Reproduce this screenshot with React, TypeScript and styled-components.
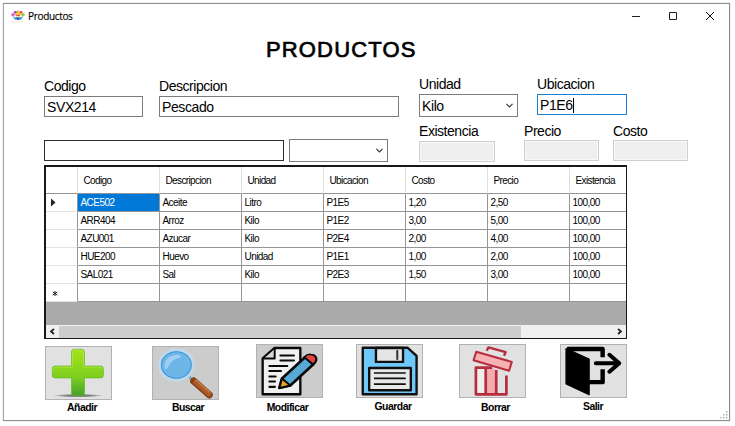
import React from "react";
import styled, { createGlobalStyle } from "styled-components";

const GlobalStyle = createGlobalStyle`
  *, *::before, *::after { box-sizing: border-box; }
  body { margin: 0; background: #fff; }
  body, button { font-family: "Liberation Sans", Arial, sans-serif; color: #000; }
`;

const Page = styled.div`
  width: 735px;
  height: 426px;
  padding: 3px;
  overflow: hidden;
  background: #fff;
`;

const Window = styled.main`
  display: flex;
  flex-direction: column;
  width: 727px;
  height: 418px;
  border: 1px solid #8c8c8c;
  border-left-color: #a5a5a5;
  box-shadow: 0 0 1px #aaa;
  position: relative;
`;

const TitleBar = styled.header`
  display: flex;
  align-items: center;
  height: 24px;
  padding: 0 11px 0 7px;
`;

const Caption = styled.span`
  flex: 1;
  padding-left: 3px;
  font: 10px/14px "Open Sans", "Noto Sans", sans-serif;
  letter-spacing: -0.33px;
  -webkit-text-stroke: 0.15px #000;
`;

const Controls = styled.div`
  display: flex;
  gap: 27px;
  padding-right: 3px;
`;

const Control = styled.button`
  display: flex;
  width: 10px;
  height: 10px;
  padding: 0;
  border: 0;
  background: none;
`;

const Heading = styled.h1`
  margin: 9px 0 0 262px;
  height: 25px;
  font-size: 22px;
  line-height: 26px;
  font-weight: 400;
  letter-spacing: 1.15px;
  -webkit-text-stroke: 0.7px #000;
`;

const FormRow = styled.div<{ $h: number }>`
  display: flex;
  align-items: flex-end;
  height: ${(p) => p.$h}px;
  margin-left: 40px;
`;

const Field = styled.label<{ $w: number; $before?: number; $lift?: number }>`
  display: flex;
  flex-direction: column;
  width: ${(p) => p.$w}px;
  margin-left: ${(p) => p.$before ?? 0}px;
  margin-bottom: ${(p) => p.$lift ?? 0}px;
`;

const FieldLabel = styled.span<{ $gap?: number }>`
  font-size: 14px;
  line-height: 16px;
  letter-spacing: -0.46px;
  white-space: nowrap;
  margin-bottom: ${(p) => p.$gap ?? 2}px;
`;

const Box = styled.span<{ $tone?: "focus" | "disabled" | "dark"; $tall?: boolean }>`
  display: flex;
  align-items: center;
  height: ${(p) => (p.$tall ? 23 : 21)}px;
  padding: 0 4px 0 2px;
  border: 1px solid
    ${(p) =>
      p.$tone === "focus" ? "#1a80d9" : p.$tone === "disabled" ? "#cfcfcf" : p.$tone === "dark" ? "#303030" : "#7c7c7c"};
  background: ${(p) => (p.$tone === "disabled" ? "#efefef" : "#fff")};
  box-shadow: ${(p) => (p.$tone === "disabled" ? "inset 0 0 0 1px #f8f8f8" : "none")};
  font-size: 14px;
  line-height: 16px;
  letter-spacing: -0.4px;
`;

const Value = styled.span`
  flex: 1;
`;

const Caret = styled.i`
  display: inline-block;
  width: 1px;
  height: 15px;
  background: #000;
  vertical-align: -3px;
`;

const Grid = styled.section`
  display: flex;
  flex-direction: column;
  width: 583px;
  height: 174px;
  margin: 3px 0 0 40px;
  border: 1px solid #181818;
  border-top-width: 2px;
  border-left-width: 2px;
  background: #ababab;
`;

const GridRow = styled.div<{ $header?: boolean }>`
  display: grid;
  grid-template-columns: 32px repeat(6, 82px) 1fr;
  height: ${(p) => (p.$header ? 27 : 18)}px;
  overflow: hidden;
  font-size: 10px;
  line-height: ${(p) => (p.$header ? 27 : 17)}px;
  letter-spacing: ${(p) => (p.$header ? -0.62 : -0.56)}px;
`;

const Cell = styled.span<{ $kind?: "head" | "stub" | "selected" }>`
  display: flex;
  align-items: center;
  overflow: hidden;
  padding-left: ${(p) => (p.$kind === "head" ? 5.5 : 2.5)}px;
  border-right: 1px solid ${(p) => (p.$kind === "head" ? "#dedede" : "#959595")};
  border-bottom: 1px solid ${(p) => (p.$kind === "stub" ? "#e2e2e2" : "#959595")};
  background: ${(p) => (p.$kind === "selected" ? "#0078d7" : "#fff")};
  color: ${(p) => (p.$kind === "selected" ? "#fff" : "#000")};
  &:last-child { border-right: 0; }
`;

const ScrollBar = styled.div`
  display: flex;
  align-items: center;
  height: 13px;
  margin-top: auto;
  background: #f0f0f0;
`;

const Arrow = styled.svg`
  width: 13px;
  height: 13px;
  fill: none;
  stroke: #222;
  stroke-width: 1.7;
`;

const Thumb = styled.div`
  width: 462px;
  height: 12px;
  margin-right: auto;
  background: #cdcdcd;
`;

const Actions = styled.footer`
  display: flex;
  align-items: flex-start;
  margin: 5px 0 0 41px;
`;

const Action = styled.div<{ $before: number; $drop?: boolean }>`
  display: flex;
  flex-direction: column;
  width: 67px;
  margin-left: ${(p) => p.$before}px;
  margin-top: ${(p) => (p.$drop ? 2 : 0)}px;
`;

const ActionButton = styled.button<{ $dim?: boolean }>`
  display: flex;
  width: 67px;
  height: 54px;
  padding: 0;
  border: 1px solid #b2b2b2;
  background: ${(p) => (p.$dim ? "#cccccc" : "#e1e1e1")};
  svg { width: 65px; height: 52px; }
`;

const ActionLabel = styled.span<{ $gap: number; $shift?: number }>`
  margin-top: ${(p) => p.$gap}px;
  padding-left: ${(p) => Math.max(p.$shift ?? 0, 0)}px;
  padding-right: ${(p) => Math.max(-(p.$shift ?? 0), 0)}px;
  text-align: center;
  font-size: 10.4px;
  line-height: 12px;
  font-weight: 700;
  letter-spacing: -0.5px;
`;

const Grip = styled.svg`
  position: absolute;
  right: 1px;
  bottom: 1px;
  width: 8px;
  height: 8px;
  fill: #b4b4b4;
`;

const ChevronDown = () => (
  <svg width="7" height="5" viewBox="0 0 7 5" fill="none" stroke="#333" strokeWidth="1.1">
    <path d="M.4 .9 3.5 4 6.6 .9" />
  </svg>
);

const AppIcon = () => (
  <svg width="14" height="13" viewBox="0 0 14 13">
    <path d="M7 0 9 3 5 3Z" fill="#f3a61c" />
    <circle cx="4.3" cy="2.3" r="1.5" fill="#a44bc0" />
    <circle cx="10" cy="2.3" r="1.5" fill="#ef5a3c" />
    <circle cx="2" cy="4.7" r="1.7" fill="#e55ac3" />
    <circle cx="12" cy="4.7" r="1.7" fill="#8ed04a" />
    <path d="M4 4 7 2 10 4 8.8 6.5H5.2Z" fill="#f5d128" />
    <path d="M4.6 4.7 7 5.8 9.4 4.7" stroke="#d93a5e" fill="none" />
    <path d="M2 6.5Q7 8.2 12 6.5L10.2 9.8H3.8Z" fill="#3aa7e0" />
    <path d="M5.3 7.5H8.7L8 9.8H6Z" fill="#3453b8" />
    <path d="M1.5 11.8H12.5" stroke="#f3c49c" strokeDasharray="1.5 1.3" />
  </svg>
);

const AddIcon = () => (
  <svg viewBox="49 27 196 153" preserveAspectRatio="none">
    <defs>
      <linearGradient id="leaf" x1="0" y1="0" x2="0" y2="1">
        <stop offset="0" stopColor="#a4e318" />
        <stop offset=".6" stopColor="#7fcf20" />
        <stop offset="1" stopColor="#43a02a" />
      </linearGradient>
      <radialGradient id="shade">
        <stop offset="0" stopColor="#666" />
        <stop offset=".6" stopColor="#8c8c8c" />
        <stop offset="1" stopColor="#e1e1e1" />
      </radialGradient>
    </defs>
    <ellipse cx="146" cy="170" rx="76" ry="5" fill="url(#shade)" />
    <path
      d="M133 34H158Q165 34 165 42V83H214Q222 83 222 91V110Q222 118 214 118H165V162Q165 170 157 170H134Q126 170 126 162V118H76Q68 118 68 110V91Q68 83 76 83H126V42Q126 34 133 34Z"
      fill="url(#leaf)"
      stroke="#5fb51c"
      strokeWidth="2"
    />
    <path d="M129 84V42Q129 37 134 37H157Q162 37 162 42V86H212Q219 86 219 94M71 98V92Q71 86 77 86H129" fill="none" stroke="#b6eb52" strokeWidth="2" />
  </svg>
);

const SearchIcon = () => (
  <svg viewBox="369 27 195 153" preserveAspectRatio="none">
    <path d="M476 113 490 126" stroke="#79aacb" strokeWidth="8" />
    <path d="M491 127 538 168" stroke="#85411b" strokeWidth="21" strokeLinecap="round" />
    <path d="M492 126 537 165" stroke="#ad5a27" strokeWidth="14" strokeLinecap="round" />
    <path d="M496 123 539 160" stroke="#d0884f" strokeWidth="3" strokeLinecap="round" />
    <path d="M482 133 495 119" stroke="#703615" strokeWidth="4" />
    <ellipse cx="439" cy="80" rx="51" ry="45" fill="#6eb6e8" stroke="#c1d8e9" strokeWidth="9" />
    <ellipse cx="439" cy="80" rx="45" ry="39" fill="none" stroke="#3f98d9" strokeWidth="3" />
    <path d="M404 88Q402 55 438 50Q456 48 451 58Q423 63 413 88Q408 97 404 88Z" fill="#9ed0f2" />
  </svg>
);

const EditIcon = () => (
  <svg viewBox="81 22 195 154" preserveAspectRatio="none" strokeLinejoin="round" strokeLinecap="round">
    <path d="M133 31H211V168H98V62Z" fill="#f0f0f0" stroke="#090909" strokeWidth="7" />
    <path d="M134 34V62H102" fill="#d9d9d9" stroke="#090909" strokeWidth="6" />
    <path d="M151 53H192M151 68H192M118 84H172M118 99H153M118 115H137M118 130H135M118 146H135" stroke="#090909" strokeWidth="6" />
    <path d="M156 121 225 58Q232 50 242 51Q255 52 258 61Q260 69 251 78L181 142 148 149Z" fill="#59a9d6" stroke="#090909" strokeWidth="8" />
    <path d="M156 121 181 142 148 149Z" fill="#eca329" stroke="#090909" strokeWidth="6" />
    <path d="M226 59Q233 51 241 52Q254 53 256 62Q257 69 248 77Z" fill="#e64340" />
    <path d="M223 58 249 80" stroke="#090909" strokeWidth="6" />
  </svg>
);

const SaveIcon = () => (
  <svg viewBox="381 22 192 154" preserveAspectRatio="none" strokeLinejoin="round">
    <path d="M398 30H530L557 54V168H398Z" fill="#70c8fa" stroke="#101010" strokeWidth="7" />
    <path d="M437 31H517V72H437Z" fill="#e5e5e5" stroke="#101010" strokeWidth="7" />
    <path d="M500 37V66" stroke="#333" strokeWidth="6" />
    <path d="M417 90H540V156H417Z" fill="#e8e8e8" stroke="#101010" strokeWidth="7" />
    <path d="M431 105H525M431 121H525M431 138H525" stroke="#101010" strokeWidth="5" />
  </svg>
);

const DeleteIcon = () => (
  <svg viewBox="91 22 192 154" preserveAspectRatio="none" strokeLinejoin="round" fill="none">
    <path d="M170 39 175 29 226 43 221 54" stroke="#b82d3e" strokeWidth="7" />
    <path d="M138 89H166V169H138Z" fill="#eee" />
    <path d="M166 89H182L198 96V169H166Z" fill="#f3adb0" />
    <path d="M186 89H138V168H228V112M167 90V168M198 96V168" stroke="#b82d3e" strokeWidth="8" />
    <path d="M139 42 244 72 236 98 131 67Z" fill="#f6b1b3" stroke="#b82d3e" strokeWidth="6" />
  </svg>
);

const ExitIcon = () => (
  <svg viewBox="393 22 192 154" preserveAspectRatio="none" strokeLinejoin="round" fill="none" stroke="#000">
    <path d="M411 34H516V58M516 94V132H474" strokeWidth="13" />
    <path d="M408 33 476 64V169L408 137Z" fill="#000" strokeWidth="4" />
    <path d="M440 42 478 59" stroke="#e1e1e1" strokeWidth="3" />
    <path d="M496 76H565M536 51 565 76 536 101" strokeWidth="12" strokeLinecap="round" />
  </svg>
);

const columns = ["Codigo", "Descripcion", "Unidad", "Ubicacion", "Costo", "Precio", "Existencia"];

const products = [
  ["ACE502", "Aceite", "Litro", "P1E5", "1,20", "2,50", "100,00"],
  ["ARR404", "Arroz", "Kilo", "P1E2", "3,00", "5,00", "100,00"],
  ["AZU001", "Azucar", "Kilo", "P2E4", "2,00", "4,00", "100,00"],
  ["HUE200", "Huevo", "Unidad", "P1E1", "1,00", "2,00", "100,00"],
  ["SAL021", "Sal", "Kilo", "P2E3", "1,50", "3,00", "100,00"],
];

const actions = [
  { label: "Añadir", Icon: AddIcon, before: 0, drop: true, dim: false, gap: 2, shift: 7 },
  { label: "Buscar", Icon: SearchIcon, before: 40, drop: true, dim: true, gap: 2, shift: 5 },
  { label: "Modificar", Icon: EditIcon, before: 37, drop: false, dim: true, gap: 4, shift: -4 },
  { label: "Guardar", Icon: SaveIcon, before: 33, drop: false, dim: false, gap: 3, shift: 7 },
  { label: "Borrar", Icon: DeleteIcon, before: 36, drop: false, dim: false, gap: 4, shift: 6 },
  { label: "Salir", Icon: ExitIcon, before: 34, drop: false, dim: false, gap: 3, shift: -1 },
];

export default function App() {
  return (
    <Page>
      <GlobalStyle />
      <Window>
        <TitleBar>
          <AppIcon />
          <Caption>Productos</Caption>
          <Controls>
            <Control aria-label="Minimizar">
              <svg width="10" height="10" stroke="#222"><path d="M1 5.5H9" /></svg>
            </Control>
            <Control aria-label="Maximizar">
              <svg width="10" height="10" fill="none" stroke="#222"><path d="M1.5 1.5H8.5V8.5H1.5Z" /></svg>
            </Control>
            <Control aria-label="Cerrar">
              <svg width="10" height="10" stroke="#111"><path d="M1 1 9 9M9 1 1 9" /></svg>
            </Control>
          </Controls>
        </TitleBar>
        <Heading>PRODUCTOS</Heading>

        <FormRow $h={55}>
          <Field $w={99}>
            <FieldLabel>Codigo</FieldLabel>
            <Box><Value>SVX214</Value></Box>
          </Field>
          <Field $w={240} $before={16}>
            <FieldLabel>Descripcion</FieldLabel>
            <Box><Value>Pescado</Value></Box>
          </Field>
          <Field $w={99} $before={20}>
            <FieldLabel>Unidad</FieldLabel>
            <Box $tall><Value>Kilo</Value><ChevronDown /></Box>
          </Field>
          <Field $w={90} $before={19} $lift={2}>
            <FieldLabel>Ubicacion</FieldLabel>
            <Box $tone="focus"><Value>P1E6<Caret /></Value></Box>
          </Field>
        </FormRow>

        <FormRow $h={45}>
          <Field $w={240} $lift={1}>
            <Box $tone="dark" />
          </Field>
          <Field $w={99} $before={5}>
            <Box $tall><Value /><ChevronDown /></Box>
          </Field>
          <Field $w={76} $before={31}>
            <FieldLabel>Existencia</FieldLabel>
            <Box $tone="disabled" />
          </Field>
          <Field $w={75} $before={29} $lift={1}>
            <FieldLabel $gap={1}>Precio</FieldLabel>
            <Box $tone="disabled" />
          </Field>
          <Field $w={75} $before={14} $lift={1}>
            <FieldLabel $gap={1}>Costo</FieldLabel>
            <Box $tone="disabled" />
          </Field>
        </FormRow>

        <Grid>
          <GridRow $header>
            <Cell $kind="head" />
            {columns.map((c) => <Cell $kind="head" key={c}>{c}</Cell>)}
          </GridRow>
          {products.map((row, r) => (
            <GridRow key={row[0]}>
              <Cell $kind="stub">
                {r === 0 && <svg width="8" height="9"><path d="M2 .5V8.5L6.5 4.5Z" fill="#222" /></svg>}
              </Cell>
              {row.map((v, c) => (
                <Cell key={c} $kind={r === 0 && c === 0 ? "selected" : undefined}>{v}</Cell>
              ))}
            </GridRow>
          ))}
          <GridRow>
            <Cell $kind="stub">
              <svg width="12" height="11" stroke="#222"><path d="M6 4V9M3.7 5 8.3 8M8.3 5 3.7 8" /></svg>
            </Cell>
            {columns.map((c) => <Cell key={c} />)}
          </GridRow>
          <ScrollBar>
            <Arrow><path d="M8 4 5 6.5 8 9" /></Arrow>
            <Thumb />
            <Arrow><path d="M5 4 8 6.5 5 9" /></Arrow>
          </ScrollBar>
        </Grid>

        <Actions>
          {actions.map(({ label, Icon, before, drop, dim, gap, shift }) => (
            <Action key={label} $before={before} $drop={drop}>
              <ActionButton $dim={dim} aria-label={label}><Icon /></ActionButton>
              <ActionLabel $gap={gap} $shift={shift}>{label}</ActionLabel>
            </Action>
          ))}
        </Actions>
        <Grip><path d="M6 0h1.5v1.5H6zM3 3h1.5v1.5H3zM6 3h1.5v1.5H6zM0 6h1.5v1.5H0zM3 6h1.5v1.5H3zM6 6h1.5v1.5H6z" /></Grip>
      </Window>
    </Page>
  );
}
